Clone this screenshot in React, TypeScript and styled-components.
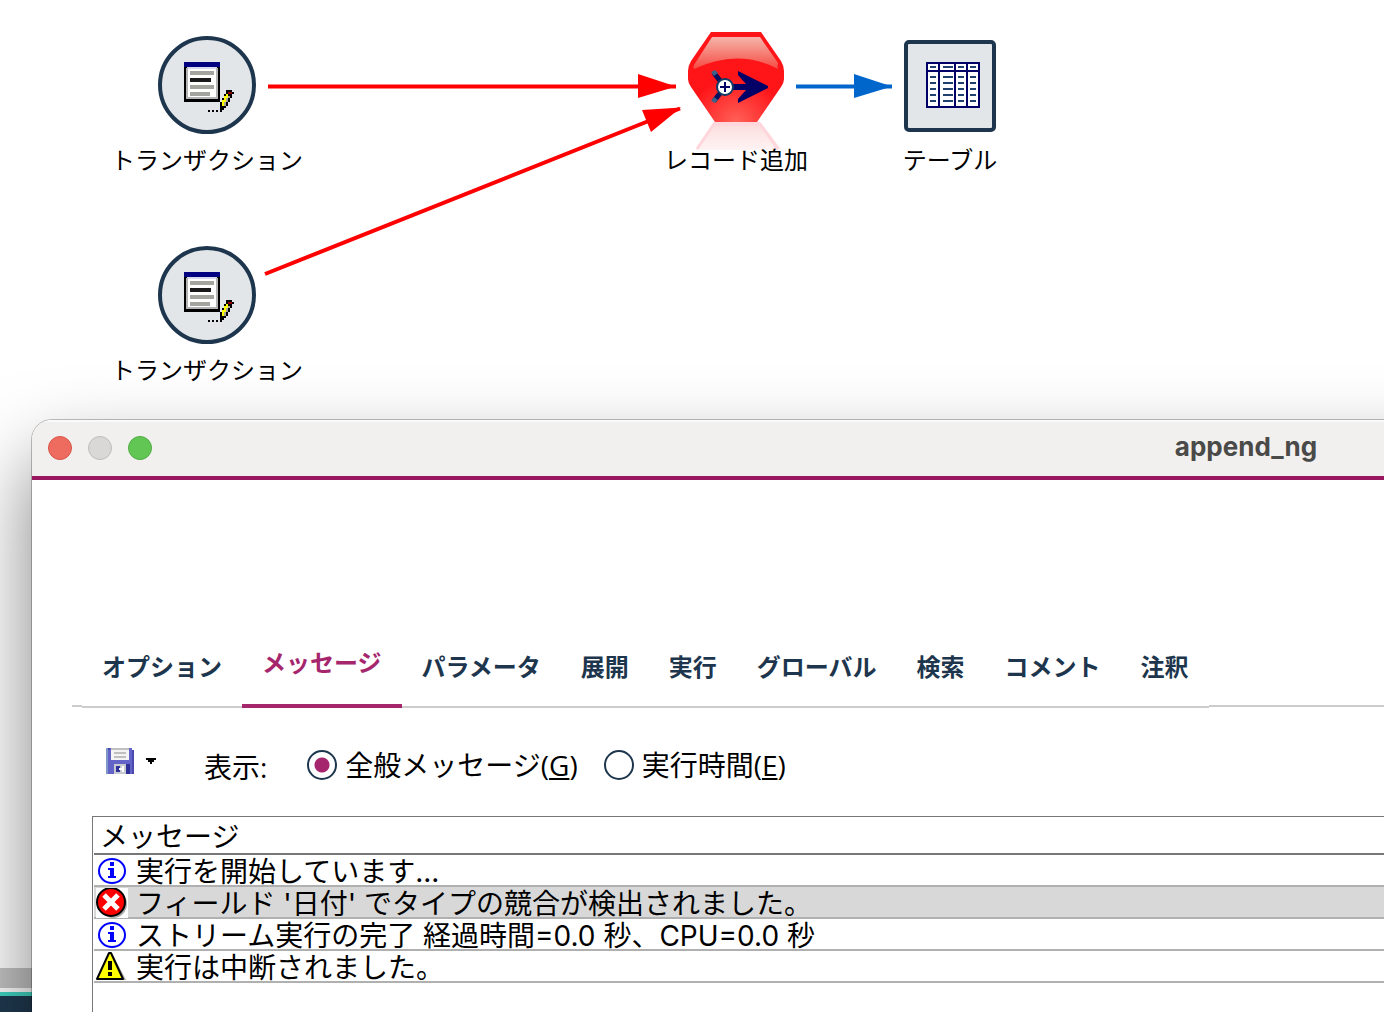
import React, { useState } from "react";
import styled, { createGlobalStyle } from "styled-components";

const ink = "#1d364d";
const accent = "#a6266e";

const GlobalStyle = createGlobalStyle`
  * { box-sizing: border-box; }
  body {
    margin: 0;
    background: #fff;
    color: #000;
    font-family: "Open Sans", "Noto Sans CJK JP", sans-serif;
  }
`;

const Desktop = styled.main`
  position: relative;
  display: flex;
  flex-direction: column;
  height: 100vh;
  overflow: hidden;
`;

const Canvas = styled.section`
  position: relative;
  flex: 1;
`;

const ScrollTrack = styled.div`
  height: 20px;
  background: #c4c4c4;
`;

const StatusBar = styled.div`
  height: 20px;
  margin-top: 4px;
  border-top: 4px solid #41d6c3;
  background: #203a50;
`;

const Edges = styled.svg`
  position: absolute;
  top: 0;
  left: 0;
  width: 100%;
  height: 400px;
`;

const Node = styled.figure<{ $x: number; $y: number }>`
  position: absolute;
  left: ${(p) => p.$x}px;
  top: ${(p) => p.$y}px;
  width: 192px;
  margin: 0;
  display: flex;
  flex-direction: column;
  align-items: center;
  gap: 9px;
`;

const Glyph = styled.svg`
  display: block;
  overflow: visible;
`;

const NodeLabel = styled.figcaption`
  position: relative;
  font-family: "Noto Sans CJK JP", sans-serif;
  font-size: 24px;
  line-height: 32px;
  white-space: nowrap;
`;

const Window = styled.section`
  position: absolute;
  top: 420px;
  left: 32px;
  right: -1076px;
  bottom: -80px;
  display: flex;
  flex-direction: column;
  overflow: hidden;
  border-radius: 20px;
  background: #fff;
  box-shadow: 0 0 0 1px rgba(0, 0, 0, 0.24), 0 40px 80px rgba(0, 0, 0, 0.5);
`;

const TitleBar = styled.header`
  display: grid;
  grid-template-columns: 1fr auto 1fr;
  align-items: center;
  height: 60px;
  padding: 0 16px;
  background: #f2f0ef;
  border-bottom: 4px solid #99175f;
  box-shadow: inset 0 2px #fbfafa;
`;

const Lights = styled.div`
  display: flex;
  gap: 16px;
`;

const Light = styled.button<{ $fill: string; $edge: string }>`
  width: 24px;
  height: 24px;
  padding: 0;
  border: 1px solid ${(p) => p.$edge};
  border-radius: 50%;
  background: ${(p) => p.$fill};
`;

const Title = styled.h1`
  margin: 0;
  padding-bottom: 2px;
  color: #4a4a48;
  font-family: Inter, sans-serif;
  font-size: 26px;
  font-weight: 700;
  line-height: 32px;
`;

const Tabs = styled.nav`
  display: flex;
  margin: 144px 40px 0;
`;

const TabRule = styled.div<{ $grow?: boolean }>`
  flex: ${(p) => (p.$grow ? "1" : "0 0 10px")};
  margin-bottom: 1px;
  border-bottom: 2px solid #ccc;
`;

const Tab = styled.button<{ $active: boolean }>`
  height: 84px;
  padding: ${(p) => (p.$active ? "0 20px 4px" : "2px 20px 0")};
  border: 0;
  border-bottom: ${(p) => (p.$active ? `4px solid ${accent}` : "2px solid #ccc")};
  background: none;
  color: ${(p) => (p.$active ? accent : ink)};
  font-family: "Noto Sans CJK JP", sans-serif;
  font-size: 24px;
  font-weight: 700;
  line-height: 32px;
  white-space: nowrap;
`;

const Toolbar = styled.form`
  display: flex;
  align-items: center;
  height: 40px;
  margin: 37px 74px 0;
`;

const SaveButton = styled.button`
  display: flex;
  align-items: center;
  gap: 12px;
  padding: 0 0 8px;
  margin-right: 48px;
  border: 0;
  background: none;
`;

const ShowLabel = styled.span`
  margin-right: 40px;
  padding-top: 4px;
  font-size: 28px;
  line-height: 32px;
`;

const Option = styled.label`
  display: flex;
  align-items: center;
  gap: 8px;
  margin-right: 26px;
  font-size: 28px;
  line-height: 32px;
  white-space: nowrap;

  u {
    text-decoration-thickness: 2px;
    text-underline-offset: 2px;
  }
`;

const Radio = styled.input`
  appearance: none;
  width: 30px;
  height: 30px;
  margin: 0;
  border: 2px solid ${ink};
  border-radius: 50%;
  background: #fff;

  &:checked {
    background: radial-gradient(circle, ${accent} 7px, #fff 8px);
  }
`;

const MessagePane = styled.div`
  flex: 1;
  margin: 31px 60px 0;
  padding-left: 1px;
  border-top: 1px solid #777;
  border-left: 1px solid #777;
`;

const MessageTable = styled.table`
  width: 100%;
  border-collapse: separate;
  border-spacing: 0;
  font-family: Inter, "Noto Sans CJK JP", sans-serif;
  font-size: 28px;
  line-height: 28px;
`;

const HeadCell = styled.th`
  height: 38px;
  padding: 4px 6px 0;
  border-bottom: 2px solid #777;
  font-weight: 400;
  text-align: left;
`;

const Cell = styled.td<{ $selected: boolean }>`
  height: 32px;
  padding: 0;
  border-bottom: 2px solid #b0b0b0;
  background: ${(p) => (p.$selected ? "#d8d8d8" : "#fff")};
`;

const Message = styled.div`
  display: flex;
  align-items: center;
  gap: 8px;
  height: 30px;
  padding: 1px 0 0 2px;
  white-space: nowrap;
`;

const MessageText = styled.span`
  padding-top: 3px;
`;

const TransactionGlyph = () => (
  <Glyph width="98" height="98" viewBox="158 36 98 98" aria-hidden="true">
    <circle cx="207" cy="85" r="47" fill="#e2e6e9" stroke={ink} strokeWidth="4" />
    <g shapeRendering="crispEdges">
      <path fill="#000" d="M184 62h36v40h-36z" />
      <path fill="#fff" d="M187 66h30v33h-30z" />
      <path fill="#000080" d="M184 62h36v5h-36z" />
      <path fill="#d8d8ee" d="M187 67h30v2h-30z" />
      <path fill="#b4b4b4" d="M186 68h2v31h-2zM216 68h2v31h-2zM188 97h28v2h-28z" />
      <path fill="#a4a49e" d="M190 71h24v4h-24zM190 85h24v4h-24zM190 92h20v4h-20z" />
      <path fill="#181818" d="M190 78h21v4h-21z" />
      <path
        fill="#000"
        d="M226 90h6v2h2v2h-2v4h-2v4h-2v4h-2v2h-2v2h-2v2h-2v-10h2v-4h2v-4h2zM208 110h2v2h-2zM212 110h2v2h-2zM216 110h2v2h-2z"
      />
      <path fill="#ff0" d="M226 94h2v4h-2v4h-2v4h-2v-6h2v-4h2z" />
      <path fill="#aaa69a" d="M228 96h2v2h-2v4h-2v4h-2v-4h2v-4h2z" />
      <path fill="#900000" d="M228 92h4v2h-4z" />
    </g>
  </Glyph>
);

const AppendGlyph = () => (
  <Glyph width="96" height="98" viewBox="688 36 96 98" aria-hidden="true">
    <defs>
      <linearGradient id="gloss" x1="0" y1="0" x2="0" y2="1">
        <stop offset="0" stopColor="#f6b6ab" />
        <stop offset="1" stopColor="#f54a42" />
      </linearGradient>
      <radialGradient id="glow" cx="0.5" cy="1" r="0.5">
        <stop offset="0" stopColor="#ff6158" />
        <stop offset="1" stopColor="#ff1418" />
      </radialGradient>
      <linearGradient id="mirror" x1="0" y1="0" x2="0" y2="1">
        <stop offset="0" stopColor="#fbdcdc" />
        <stop offset="1" stopColor="#fff3f3" />
      </linearGradient>
    </defs>
    <path d="M714 122h46l22 28h-86z" fill="url(#mirror)" />
    <path d="M697 149l17-25h46l18 25" fill="none" stroke="#ffd6dc" strokeWidth="3" />
    <path
      d="M711 32h50l20 29q3 5 3 10v8q0 4-3 8l-24 35h-42l-24-35q-3-4-3-8v-8q0-5 3-10z"
      fill="url(#glow)"
    />
    <path d="M712 37h48l18 26q-1 4 0 6q-40-21-84 0q-1-2 0-4z" fill="url(#gloss)" />
    <path d="M711 34h50" stroke="#ff1418" strokeWidth="4" />
    <path d="M714 73l7 9M714 101l7-9" stroke="#08105f" strokeWidth="5" />
    <path d="M711 72l4-2 3 3-4 3zM711 101l4 2 3-3-4-3z" fill="#3a6288" />
    <path d="M733 84h13l-8-9v-4l10 5 20 10v2l-20 10-10 5v-4l8-9h-13z" fill="#000066" />
    <circle cx="725" cy="87" r="8" fill="#fff" stroke="#123a66" strokeWidth="2" />
    <path d="M720 87h10M725 82v10" stroke="#000066" strokeWidth="2" />
  </Glyph>
);

const columns = [
  { x: 930, w: 6 },
  { x: 943, w: 10 },
  { x: 958, w: 6 },
  { x: 970, w: 6 },
];

const TableGlyph = () => (
  <Glyph width="92" height="98" viewBox="905 36 92 98" aria-hidden="true">
    <rect x="907" y="42" width="88" height="88" rx="3" fill="#e2e6e9" stroke={ink} strokeWidth="4" />
    <g shapeRendering="crispEdges" fill="none" stroke="#000066" strokeWidth="2">
      <path fill="#fff" d="M928 63h52v44h-52z" />
      <path d="M928 71h52M940 63v44M956 63v44M968 63v44" />
      {columns.map((c) =>
        [67, 77, 83, 89, 95, 101].map((y) => (
          <path key={`${c.x}-${y}`} stroke="#204070" d={`M${c.x + 1} ${y}h${c.w}`} />
        ))
      )}
    </g>
  </Glyph>
);

const SaveGlyph = () => (
  <svg width="28" height="26" viewBox="0 0 28 26" shapeRendering="crispEdges" aria-hidden="true">
    <path fill="#6464c8" d="M0 0h26v2h2v24H0z" />
    <path fill="#7f98c8" d="M0 0h2v26H0z" />
    <path fill="#4a4aae" d="M26 2h2v24h-2zM2 0h2v2H2z" />
    <path fill="#f4f4f4" d="M5 0h18v12H5z" />
    <path fill="#c0c0c0" d="M5 0h18v2H5zM8 4h12v2H8zM8 8h12v2H8z" />
    <path fill="#c8c8d0" d="M8 16h12v10H8z" />
    <path fill="#30309a" d="M10 18h4v6h-4zM20 16h4v10h-4z" />
    <path fill="#fff" d="M13 20h3v2h-3zM16 18h2v6h-2z" />
  </svg>
);

const InfoGlyph = () => (
  <svg width="32" height="30" viewBox="0 0 32 30" aria-hidden="true">
    <ellipse cx="16" cy="15" rx="13" ry="12" fill="#fff" stroke="#00f" strokeWidth="2" />
    <path
      fill="#00f"
      shapeRendering="crispEdges"
      d="M14 6h4v4h-4zM12 12h6v8h2v2h-8v-2h2v-6h-2z"
    />
  </svg>
);

const ErrorGlyph = () => (
  <svg width="32" height="30" viewBox="0 0 32 30" aria-hidden="true">
    <path fill="#fff" d="M0 0h32v30H0z" />
    <circle cx="17" cy="16" r="14" fill="#aaa" />
    <circle cx="15" cy="14" r="14" fill="#f00" stroke="#000" strokeWidth="2" />
    <path d="M8 7l14 14M22 7L8 21" stroke="#fff" strokeWidth="5" />
  </svg>
);

const WarningGlyph = () => (
  <svg width="32" height="30" viewBox="0 0 32 30" aria-hidden="true">
    <path d="M17 3l13 25H4z" fill="#aaa" />
    <path d="M13 1h2l12 26H1z" fill="#ff0" stroke="#000" strokeWidth="2" strokeLinejoin="round" />
    <path d="M12 9h4v9h-4zM12 20h4v4h-4z" fill="#000" />
  </svg>
);

const tabs = [
  "オプション",
  "メッセージ",
  "パラメータ",
  "展開",
  "実行",
  "グローバル",
  "検索",
  "コメント",
  "注釈",
];

const messages = [
  { icon: <InfoGlyph />, text: "実行を開始しています..." },
  { icon: <ErrorGlyph />, text: "フィールド '日付' でタイプの競合が検出されました。", selected: true },
  { icon: <InfoGlyph />, text: "ストリーム実行の完了 経過時間=0.0 秒、CPU=0.0 秒" },
  { icon: <WarningGlyph />, text: "実行は中断されました。" },
];

export default function App() {
  const [tab, setTab] = useState("メッセージ");
  const [view, setView] = useState("general");

  return (
    <Desktop>
      <GlobalStyle />
      <Canvas>
        <Edges aria-hidden="true">
          <g stroke="#f00" fill="#f00">
            <path d="M268 86.500H676M265 274L680 108.500" strokeWidth="4" />
            <path stroke="none" d="M638 74l38 12.500L638 98zM642 110l39-2.500L651 132z" />
          </g>
          <g stroke="#06c" fill="#06c">
            <path d="M796 86.500h96" strokeWidth="4" />
            <path stroke="none" d="M854 74l38 12.500L854 98z" />
          </g>
        </Edges>
        <Node $x={111} $y={36}>
          <TransactionGlyph />
          <NodeLabel>トランザクション</NodeLabel>
        </Node>
        <Node $x={111} $y={246}>
          <TransactionGlyph />
          <NodeLabel>トランザクション</NodeLabel>
        </Node>
        <Node $x={640} $y={36}>
          <AppendGlyph />
          <NodeLabel>レコード追加</NodeLabel>
        </Node>
        <Node $x={854} $y={36}>
          <TableGlyph />
          <NodeLabel>テーブル</NodeLabel>
        </Node>
      </Canvas>
      <ScrollTrack />
      <StatusBar />

      <Window aria-label="append_ng">
        <TitleBar>
          <Lights>
            <Light aria-label="閉じる" $fill="#ed6b5f" $edge="#d95448" />
            <Light aria-label="しまう" $fill="#d9d8d7" $edge="#bdbcbb" />
            <Light aria-label="拡大" $fill="#62c655" $edge="#4fac41" />
          </Lights>
          <Title>append_ng</Title>
        </TitleBar>

        <Tabs>
          <TabRule />
          {tabs.map((name) => (
            <Tab key={name} type="button" $active={name === tab} onClick={() => setTab(name)}>
              {name}
            </Tab>
          ))}
          <TabRule $grow />
        </Tabs>

        <Toolbar>
          <SaveButton type="button" aria-label="保存">
            <SaveGlyph />
            <svg width="10" height="6" viewBox="0 0 10 6" shapeRendering="crispEdges" aria-hidden="true">
              <path d="M0 0h10v2H8v2H6v2H4V4H2V2H0z" />
            </svg>
          </SaveButton>
          <ShowLabel>表示:</ShowLabel>
          <Option>
            <Radio
              type="radio"
              name="view"
              checked={view === "general"}
              onChange={() => setView("general")}
            />
            <span>
              全般メッセージ(<u>G</u>)
            </span>
          </Option>
          <Option>
            <Radio
              type="radio"
              name="view"
              checked={view === "runtime"}
              onChange={() => setView("runtime")}
            />
            <span>
              実行時間(<u>E</u>)
            </span>
          </Option>
        </Toolbar>

        <MessagePane>
          <MessageTable>
            <thead>
              <tr>
                <HeadCell scope="col">メッセージ</HeadCell>
              </tr>
            </thead>
            <tbody>
              {messages.map((m) => (
                <tr key={m.text}>
                  <Cell $selected={Boolean(m.selected)}>
                    <Message>
                      {m.icon}
                      <MessageText>{m.text}</MessageText>
                    </Message>
                  </Cell>
                </tr>
              ))}
            </tbody>
          </MessageTable>
        </MessagePane>
      </Window>
    </Desktop>
  );
}
